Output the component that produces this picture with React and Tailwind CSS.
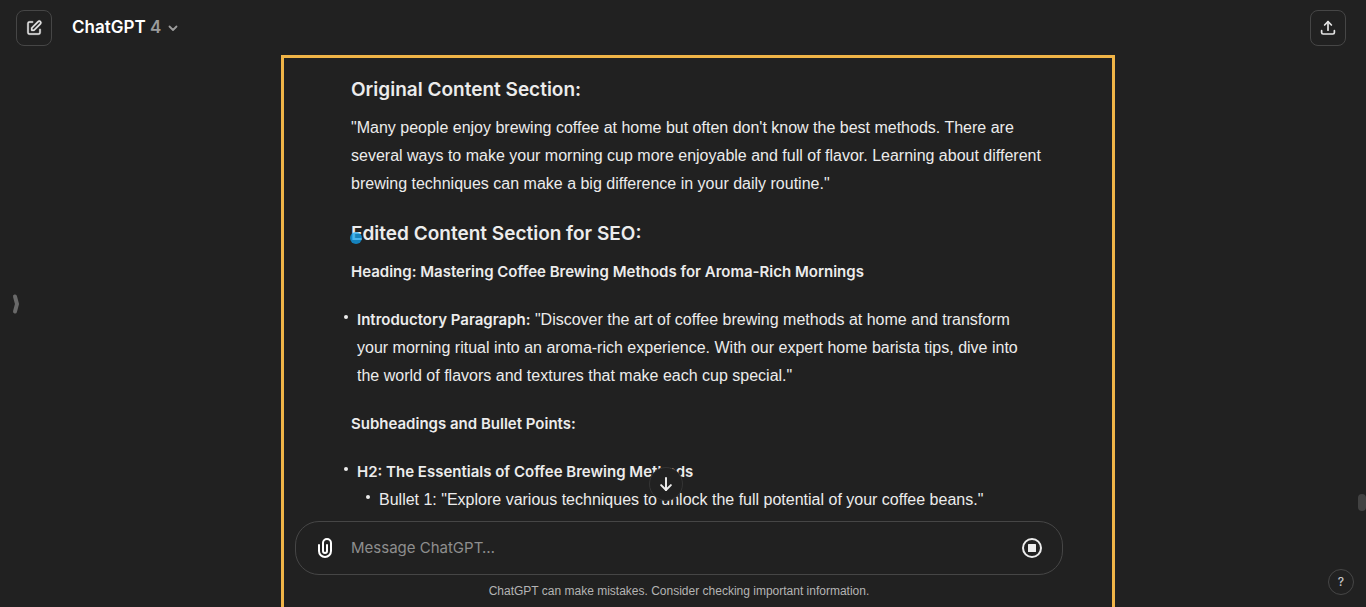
import { useState } from "react";

const EditIcon = () => (
  <svg width="18" height="18" viewBox="0 0 24 24" fill="none" aria-hidden="true">
    <path
      fillRule="evenodd"
      clipRule="evenodd"
      d="M16.793 2.793a3.121 3.121 0 1 1 4.414 4.414l-8.5 8.5A1 1 0 0 1 12 16H9a1 1 0 0 1-1-1v-3a1 1 0 0 1 .293-.707l8.5-8.5Zm3 1.414a1.121 1.121 0 0 0-1.586 0L10 12.414V14h1.586l8.207-8.207a1.121 1.121 0 0 0 0-1.586ZM6 5a1 1 0 0 0-1 1v12a1 1 0 0 0 1 1h12a1 1 0 0 0 1-1v-4a1 1 0 1 1 2 0v4a3 3 0 0 1-3 3H6a3 3 0 0 1-3-3V6a3 3 0 0 1 3-3h4a1 1 0 1 1 0 2H6Z"
      fill="currentColor"
      stroke="currentColor"
      strokeWidth="0.4"
    />
  </svg>
);

const ShareIcon = () => (
  <svg width="18" height="18" viewBox="0 0 24 24" fill="none" stroke="currentColor" strokeWidth="2.3" strokeLinecap="round" strokeLinejoin="round" aria-hidden="true">
    <path d="M12 15V3.5" />
    <path d="M7.5 8 12 3.5 16.5 8" />
    <path d="M3.5 15.5V18a2 2 0 0 0 2 2h13a2 2 0 0 0 2-2v-2.5" />
  </svg>
);

const ClipIcon = () => (
  <svg width="24" height="24" viewBox="0 0 24 24" fill="none" aria-hidden="true">
    <path
      fillRule="evenodd"
      clipRule="evenodd"
      d="M9 7a5 5 0 0 1 10 0v8a7 7 0 1 1-14 0V9a1 1 0 0 1 2 0v6a5 5 0 0 0 10 0V7a3 3 0 1 0-6 0v8a1 1 0 1 0 2 0V9a1 1 0 1 1 2 0v6a3 3 0 1 1-6 0V7Z"
      fill="currentColor"
    />
  </svg>
);

const DownIcon = () => (
  <svg width="18" height="18" viewBox="0 0 24 24" fill="none" stroke="currentColor" strokeWidth="2.6" strokeLinecap="round" strokeLinejoin="round" aria-hidden="true">
    <path d="M12 4v16" />
    <path d="m5.5 13.5 6.5 6.5 6.5-6.5" />
  </svg>
);

const StopIcon = () => (
  <svg width="20" height="20" viewBox="0 0 20 20" fill="none" aria-hidden="true">
    <circle cx="10" cy="10" r="9" stroke="currentColor" strokeWidth="2" />
    <rect x="6" y="6" width="8" height="8" rx="0.5" fill="currentColor" />
  </svg>
);

const Header = () => (
  <header className="flex h-14 shrink-0 items-center justify-between pl-4 pr-5">
    <div className="flex items-center gap-5">
      <button type="button" aria-label="New chat" className="flex h-9 w-9 items-center justify-center rounded-lg border border-[#464646] text-[#e3e3e3]">
        <EditIcon />
      </button>
      <button type="button" className="flex items-center gap-1 font-['Inter',sans-serif] text-[17px] font-semibold text-white">
        <span>
          ChatGPT <span className="text-[#9b9b9b]">4</span>
        </span>
        <svg width="16" height="16" viewBox="0 0 16 16" fill="none" stroke="#9b9b9b" strokeWidth="1.8" strokeLinecap="round" strokeLinejoin="round" aria-hidden="true">
          <path d="m4.5 6.5 3.5 3.5 3.5-3.5" />
        </svg>
      </button>
    </div>
    <button type="button" aria-label="Share chat" className="flex h-9 w-9 items-center justify-center rounded-lg border border-[#464646] text-[#e3e3e3]">
      <ShareIcon />
    </button>
  </header>
);

const bullet =
  "relative before:absolute before:-left-[13px] before:top-[9px] before:h-1 before:w-1 before:rounded-full before:bg-[#ececec]";
const heading = "relative mb-2 font-['Inter',sans-serif] text-[19px] leading-8 font-semibold";
const boldLine = "mb-5 font-['Inter',sans-serif] text-[15px] leading-7 font-semibold";
const bold = "font-['Inter',sans-serif] text-[15px] leading-none font-semibold";

const Answer = () => (
  <article className="pl-14 pr-5 pt-[18px] text-base leading-7 text-[#ececec]">
    <h3 className={heading}>Original Content Section:</h3>
    <p className="mb-5">
      "Many people enjoy brewing coffee at home but often don't know the best methods. There are
      several ways to make your morning cup more enjoyable and full of flavor. Learning about different
      brewing techniques can make a big difference in your daily routine."
    </p>
    <h3 className={heading}>
      Edited Content Section for SEO:
      <span className="absolute -left-px top-3.5 h-3 w-3 rounded-full bg-[#12a3f0]/75" />
    </h3>
    <p className={boldLine}>Heading: Mastering Coffee Brewing Methods for Aroma-Rich Mornings</p>
    <ul className="mb-5 pl-1.5">
      <li className={bullet}>
        <strong className={bold}>Introductory Paragraph:</strong> "Discover the art of coffee brewing
        methods at home and transform your morning ritual into an aroma-rich experience. With our expert home
        barista tips, dive into the world of flavors and textures that make each cup special."
      </li>
    </ul>
    <p className={boldLine}>Subheadings and Bullet Points:</p>
    <ul className="pl-1.5">
      <li className={bullet}>
        <strong className={bold}>H2: The Essentials of Coffee Brewing Methods</strong>
        <ul className="pl-[22px]">
          <li className={bullet}>
            Bullet 1: "Explore various techniques to unlock the full potential of your coffee beans."
          </li>
        </ul>
      </li>
    </ul>
  </article>
);

const Composer = () => {
  const [message, setMessage] = useState("");

  return (
    <div className="relative shrink-0 py-2">
      <button
        type="button"
        aria-label="Scroll to bottom"
        className="absolute bottom-full left-1/2 -ml-[30px] mb-3 flex h-[34px] w-[34px] items-center justify-center rounded-full border border-[#343434] bg-[#212121] text-[#ececec]"
      >
        <DownIcon />
      </button>
      <form
        onSubmit={(e) => e.preventDefault()}
        className="flex h-[54px] items-center rounded-3xl border border-[#464646] pl-[17px] pr-5"
      >
        <button type="button" aria-label="Attach files" className="mr-3.5 text-white">
          <ClipIcon />
        </button>
        <input
          type="text"
          aria-label="Message ChatGPT"
          placeholder="Message ChatGPT…"
          value={message}
          onChange={(e) => setMessage(e.target.value)}
          className="min-w-0 flex-1 bg-transparent font-['Inter',sans-serif] text-[15px] text-[#ececec] outline-none placeholder:text-[#8e8e8e]"
        />
        <button type="button" aria-label="Stop generating" className="text-[#ececec]">
          <StopIcon />
        </button>
      </form>
      <p className="mt-2 text-center text-xs text-[#b4b4b4]">
        ChatGPT can make mistakes. Consider checking important information.
      </p>
    </div>
  );
};

const App = () => (
  <div className="relative flex h-screen flex-col overflow-hidden bg-[#212121] font-['Liberation_Sans',Arial,sans-serif]">
    <Header />
    <main className="flex min-h-0 flex-1 justify-center pr-2">
      <div className="relative flex w-full max-w-3xl flex-col">
        <div className="min-h-0 flex-1 overflow-hidden">
          <Answer />
        </div>
        <Composer />
        <div className="pointer-events-none absolute -bottom-2 -left-[14px] -right-[52px] -top-px border-3 border-[#f0b447]" />
      </div>
    </main>
    <button type="button" aria-label="Open sidebar" className="absolute left-3 top-1/2 -mt-2.5 text-[#696969]">
      <svg width="8" height="20" viewBox="0 0 8 20" fill="none" stroke="currentColor" strokeWidth="4" strokeLinejoin="round" strokeLinecap="round" aria-hidden="true">
        <path d="M3 2.5 5 10 3 17.5" />
      </svg>
    </button>
    <button
      type="button"
      aria-label="Help"
      className="absolute bottom-3 right-3 flex h-[26px] w-[26px] items-center justify-center rounded-full border border-[#464646] font-['Inter',sans-serif] text-xs font-medium text-[#c5c5c5]"
    >
      ?
    </button>
    <div className="absolute bottom-24 right-0 h-[17px] w-2 rounded bg-[#424242]" />
  </div>
);

export default App;
